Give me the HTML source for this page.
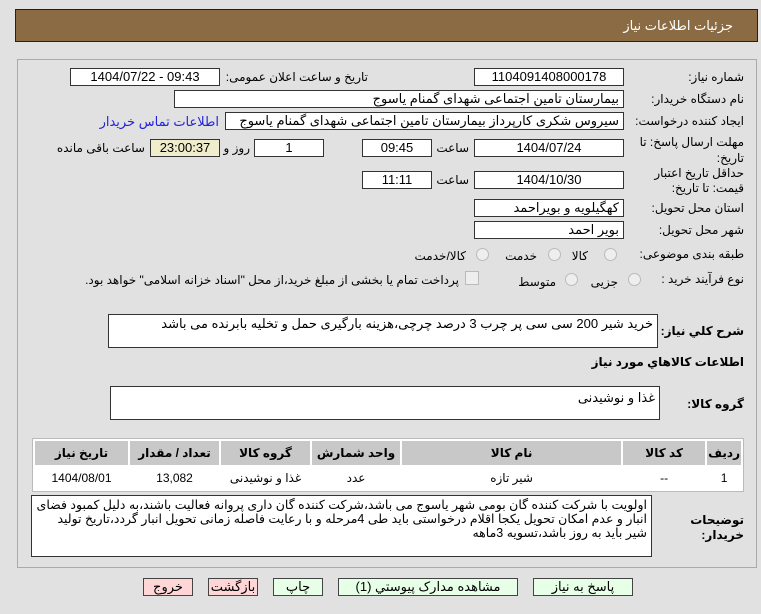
<!DOCTYPE html>
<html><head><meta charset="utf-8"><style>
body{margin:0;width:761px;height:614px;background:#e1e1e1;font-family:"Liberation Sans","DejaVu Sans",sans-serif;font-size:12px;color:#000;position:relative;overflow:hidden}
.a{position:absolute}
.hdr{left:15px;top:9px;width:743px;height:33px;background:#8b6b43;border:1px solid #222;box-sizing:border-box}
.hdr span{position:absolute;right:24px;top:8px;color:#fff;font-size:13px;direction:rtl}
.panel{left:17px;top:59px;width:740px;height:509px;border:1px solid #aaa;box-sizing:border-box}
.box{position:absolute;background:#fff;border:1px solid #333;box-sizing:border-box;height:18px;line-height:16px;font-size:13px;text-align:center;direction:rtl;overflow:hidden;white-space:nowrap}
.r{text-align:right;padding-right:4px}
.l{position:absolute;text-align:right;white-space:nowrap;font-size:12px;direction:rtl}
.rad{position:absolute;width:11px;height:11px;border-radius:50%;border:1px solid #bbb;background:#eee}
table{border-collapse:separate;border-spacing:2px;background:#fff;border:1px solid #bbb}
td{text-align:center;font-size:12px;height:20px}
th{background:#c8c8c8;font-size:12px;height:22px}
.btn{position:absolute;top:578px;height:18px;border:1px solid #444;box-sizing:border-box;text-align:center;line-height:16px;font-size:13px;direction:rtl}
.g{background:#e6ffe6}.p{background:#ffd6d6}
</style></head><body>
<div class="a hdr"><span>جزئیات اطلاعات نیاز</span></div>
<div class="a panel"></div>

<div class="l" style="right:17px;top:70px">شماره نیاز:</div>
<div class="box" style="left:474px;top:68px;width:150px;direction:ltr">1104091408000178</div>
<div class="l" style="right:393px;top:70px">تاریخ و ساعت اعلان عمومی:</div>
<div class="box" style="left:70px;top:68px;width:150px;direction:ltr">1404/07/22 - 09:43</div>

<div class="l" style="right:17px;top:92px">نام دستگاه خریدار:</div>
<div class="box r" style="left:174px;top:90px;width:450px">بیمارستان تامین اجتماعی شهدای گمنام یاسوج</div>

<div class="l" style="right:17px;top:114px">ایجاد کننده درخواست:</div>
<div class="box r" style="left:225px;top:112px;width:399px">سیروس شکری کارپرداز بیمارستان تامین اجتماعی شهدای گمنام یاسوج</div>
<div class="l" style="right:542px;top:114px;color:#2222dd;font-size:13px">اطلاعات تماس خریدار</div>

<div class="l" style="right:17px;top:134px;line-height:16px">مهلت ارسال پاسخ: تا<br>تاریخ:</div>
<div class="box" style="left:474px;top:139px;width:150px;direction:ltr">1404/07/24</div>
<div class="l" style="right:292px;top:141px">ساعت</div>
<div class="box" style="left:362px;top:139px;width:70px;direction:ltr">09:45</div>
<div class="box" style="left:254px;top:139px;width:70px">1</div>
<div class="l" style="right:511px;top:141px">روز و</div>
<div class="box" style="left:150px;top:139px;width:70px;background:#efedcb;direction:ltr">23:00:37</div>
<div class="l" style="right:616px;top:141px">ساعت باقی مانده</div>

<div class="l" style="right:17px;top:166px;line-height:15px">حداقل تاریخ اعتبار<br>قیمت: تا تاریخ:</div>
<div class="box" style="left:474px;top:171px;width:150px;direction:ltr">1404/10/30</div>
<div class="l" style="right:292px;top:173px">ساعت</div>
<div class="box" style="left:362px;top:171px;width:70px;direction:ltr">11:11</div>

<div class="l" style="right:17px;top:201px">استان محل تحویل:</div>
<div class="box r" style="left:474px;top:199px;width:150px">کهگیلویه و بویراحمد</div>
<div class="l" style="right:17px;top:223px">شهر محل تحویل:</div>
<div class="box r" style="left:474px;top:221px;width:150px">بویر احمد</div>

<div class="l" style="right:17px;top:247px">طبقه بندی موضوعی:</div>
<div class="rad" style="left:604px;top:248px"></div><div class="l" style="right:173px;top:249px">کالا</div>
<div class="rad" style="left:548px;top:248px"></div><div class="l" style="right:224px;top:249px">خدمت</div>
<div class="rad" style="left:476px;top:248px"></div><div class="l" style="right:295px;top:249px">کالا/خدمت</div>

<div class="l" style="right:17px;top:272px">نوع فرآیند خرید :</div>
<div class="rad" style="left:628px;top:273px"></div><div class="l" style="right:143px;top:275px">جزیی</div>
<div class="rad" style="left:565px;top:273px"></div><div class="l" style="right:205px;top:275px">متوسط</div>
<div class="a" style="left:465px;top:271px;width:12px;height:12px;border:1px solid #bbb;background:#eee"></div>
<div class="l" style="right:302px;top:273px">پرداخت تمام یا بخشی از مبلغ خرید،از محل "اسناد خزانه اسلامی" خواهد بود.</div>

<div class="l" style="right:17px;top:324px;font-weight:bold">شرح كلي نياز:</div>
<div class="box r" style="left:108px;top:314px;width:550px;height:34px;text-align:right;line-height:18px">خرید شیر 200 سی سی پر چرب 3 درصد چرچی،هزینه بارگیری حمل و تخلیه بابرنده می باشد</div>
<div class="l" style="right:17px;top:355px;font-weight:bold">اطلاعات کالاهاي مورد نياز</div>
<div class="l" style="right:17px;top:397px;font-weight:bold">گروه کالا:</div>
<div class="box r" style="left:110px;top:386px;width:550px;height:34px;line-height:22px">غذا و نوشیدنی</div>

<table class="a" style="left:32px;top:438px;width:712px" dir="rtl">
<tr><th style="width:22px">ردیف</th><th style="width:80px">کد کالا</th><th>نام کالا</th><th style="width:86px">واحد شمارش</th><th style="width:87px">گروه کالا</th><th style="width:87px">تعداد / مقدار</th><th style="width:91px">تاریخ نیاز</th></tr>
<tr><td>1</td><td>--</td><td>شیر تازه</td><td>عدد</td><td>غذا و نوشیدنی</td><td>13,082</td><td>1404/08/01</td></tr>
</table>

<div class="l" style="right:17px;top:513px;font-weight:bold;line-height:15px">توضیحات<br>خریدار:</div>
<div class="box" style="left:31px;top:495px;width:621px;height:62px;text-align:right;padding:2px 4px;line-height:14px;font-size:12.5px;white-space:normal">اولویت با شرکت کننده گان بومی شهر یاسوج می باشد،شرکت کننده گان داری پروانه فعالیت باشند،به دلیل کمبود فضای انبار و عدم امکان تحویل یکجا اقلام درخواستی باید طی 4مرحله و با رعایت فاصله زمانی تحویل انبار گردد،تاریخ تولید شیر باید به روز باشد،تسویه 3ماهه</div>

<div class="btn p" style="left:143px;width:50px">خروج</div>
<div class="btn p" style="left:208px;width:50px">بازگشت</div>
<div class="btn g" style="left:273px;width:50px">چاپ</div>
<div class="btn g" style="left:338px;width:180px">مشاهده مدارک پیوستي (1)</div>
<div class="btn g" style="left:533px;width:100px">پاسخ به نیاز</div>
</body></html>
